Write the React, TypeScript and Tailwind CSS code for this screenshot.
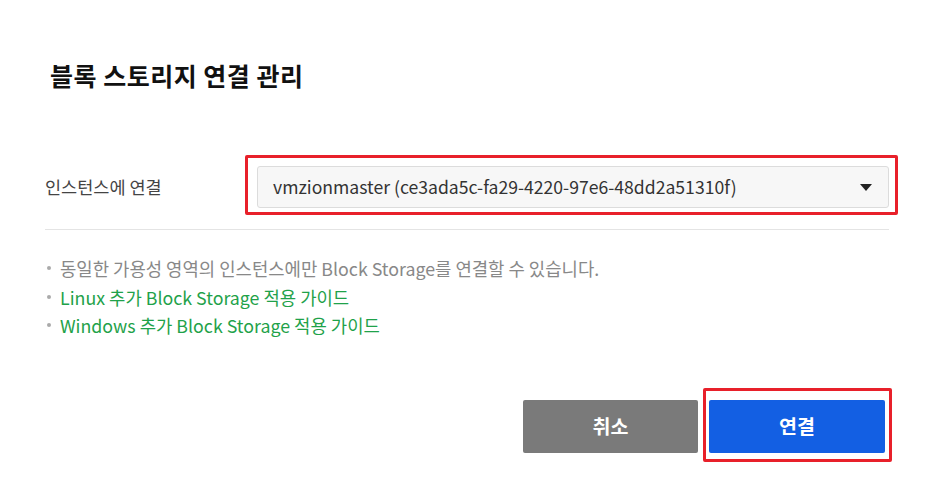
import { Fragment } from "react";

const notes = [
  { text: "동일한 가용성 영역의 인스턴스에만 Block Storage를 연결할 수 있습니다.", link: false },
  { text: "Linux 추가 Block Storage 적용 가이드", link: true },
  { text: "Windows 추가 Block Storage 적용 가이드", link: true },
];

const App = () => {
  return (
    <div
      className="w-[934px] h-[501px] bg-white text-[#222] overflow-hidden"
      style={{ fontFamily: '"Noto Sans CJK KR", "Noto Sans", sans-serif' }}
    >
      <div className="pl-[45px] pr-[45px] pt-[58px]">
        {/* Title */}
        <h1 className="pl-[5px] text-[25px] leading-[34px] font-bold text-[#111] tracking-[0.5px]">
          블록 스토리지 연결 관리
        </h1>

        {/* Instance row */}
        <div className="mt-[74px] flex items-center border-b border-[#e4e4e4] pb-[21px]">
          <div className="w-[212px] text-[17.5px] text-[#444]">인스턴스에 연결</div>
          <div className="relative flex-1">
            <div className="absolute left-[-12px] right-[-9px] top-[-11px] bottom-[-7px] border-[3.5px] border-[#e8202a] rounded-[2px] pointer-events-none" />
            <div className="h-[42px] flex items-center justify-between bg-[#f7f7f7] border border-[#dcdcdc] rounded-[3px] pl-[15px] pr-[15px]">
              <span className="text-[17.6px] text-[#333]">
                vmzionmaster (ce3ada5c-fa29-4220-97e6-48dd2a51310f)
              </span>
              <svg width="12" height="7" viewBox="0 0 12 7" className="mr-[1px]">
                <polygon points="0,0 12,0 6,7" fill="#222" />
              </svg>
            </div>
          </div>
        </div>

        {/* Notes */}
        <ul className="mt-[24px] text-[17.8px] leading-[28.5px]">
          {notes.map((n, i) => (
            <Fragment key={i}>
              <li className="flex items-center">
                <span className="w-[4px] h-[4px] rounded-full bg-[#aaa] ml-[2px] mr-[9px]" />
                <span className={n.link ? "text-[#1fa24a]" : "text-[#888]"}>{n.text}</span>
              </li>
            </Fragment>
          ))}
        </ul>

        {/* Buttons */}
        <div className="mt-[60px] flex justify-end gap-[11px] pr-[4px]">
          <button className="w-[175px] h-[53px] rounded-[2px] bg-[#7a7a7a] text-white text-[19.5px] font-bold">
            취소
          </button>
          <div className="relative">
            <div className="absolute left-[-6px] right-[-7px] top-[-12px] bottom-[-9px] border-[3.5px] border-[#e8202a] rounded-[2px] pointer-events-none" />
            <button className="w-[176px] h-[53px] rounded-[2px] bg-[#135fe3] text-white text-[19.5px] font-bold">
              연결
            </button>
          </div>
        </div>
      </div>
    </div>
  );
};

export default App;
